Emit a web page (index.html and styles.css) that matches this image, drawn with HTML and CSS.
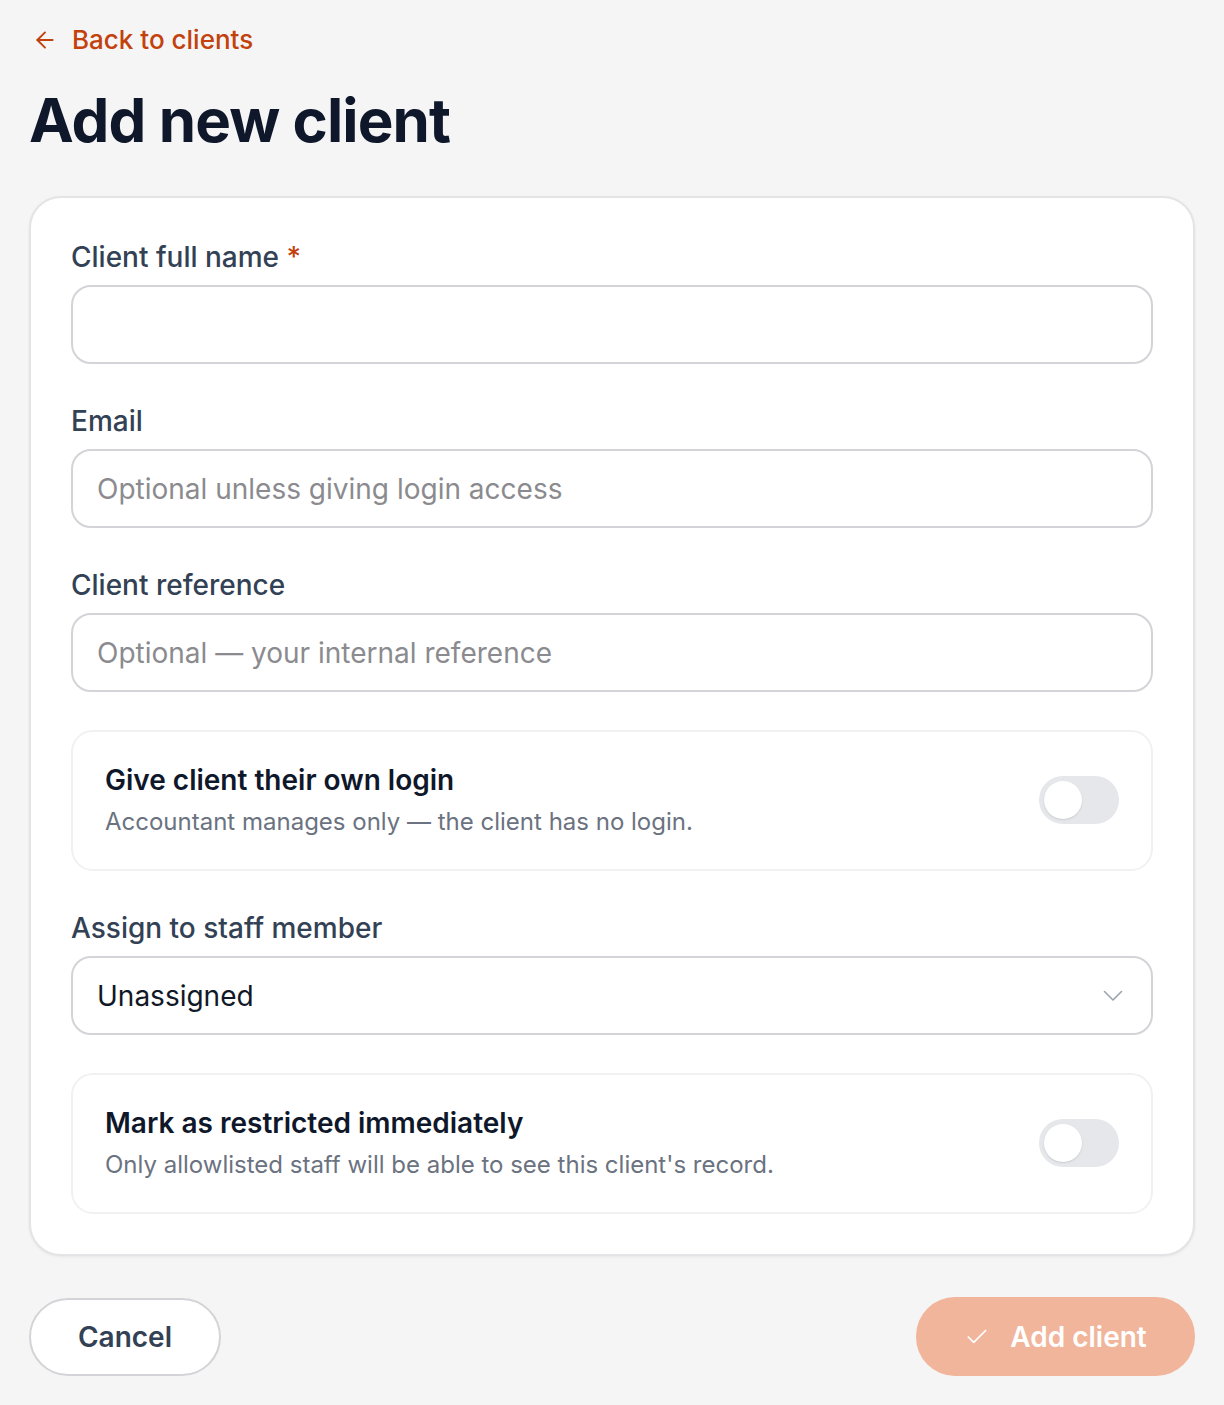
FILE: index.html
```html
<!DOCTYPE html>
<html lang="en">
<head>
<meta charset="utf-8">
<title>Add new client</title>
<link rel="stylesheet" href="styles.css">
</head>
<body>
<div class="page">
  <a class="back" href="#">
    <svg class="back-icon" viewBox="0 0 24 24" width="26" height="26" fill="none" stroke="currentColor" stroke-width="1.8" stroke-linecap="round" stroke-linejoin="round"><path d="M19 12H5"/><path d="M12 19l-7-7 7-7"/></svg>
    <span>Back to clients</span>
  </a>
  <h1 class="title">Add new client</h1>

  <form class="card">
    <div class="field">
      <label class="label">Client full name <span class="req">*</span></label>
      <input class="input" type="text">
    </div>
    <div class="field">
      <label class="label">Email</label>
      <input class="input" type="text" placeholder="Optional unless giving login access">
    </div>
    <div class="field">
      <label class="label">Client reference</label>
      <input class="input" type="text" placeholder="Optional — your internal reference">
    </div>
    <div class="toggle-card">
      <div class="toggle-text">
        <div class="toggle-title">Give client their own login</div>
        <div class="toggle-sub">Accountant manages only — the client has no login.</div>
      </div>
      <span class="switch"><span class="knob"></span></span>
    </div>
    <div class="field">
      <label class="label">Assign to staff member</label>
      <div class="select">
        <span>Unassigned</span>
        <svg class="chev" viewBox="0 0 20 12" width="20" height="12" fill="none" stroke="currentColor" stroke-width="1.6" stroke-linecap="round" stroke-linejoin="round"><path d="M1.5 1.5L10 10l8.5-8.5"/></svg>
      </div>
    </div>
    <div class="toggle-card last">
      <div class="toggle-text">
        <div class="toggle-title">Mark as restricted immediately</div>
        <div class="toggle-sub">Only allowlisted staff will be able to see this client's record.</div>
      </div>
      <span class="switch"><span class="knob"></span></span>
    </div>
  </form>

  <div class="actions">
    <button class="btn btn-cancel" type="button">Cancel</button>
    <button class="btn btn-primary" type="button">
      <svg viewBox="0 0 24 24" width="26" height="26" fill="none" stroke="currentColor" stroke-width="1.6" stroke-linecap="round" stroke-linejoin="round"><path d="M20 6L9 17l-5-5"/></svg>
      <span>Add client</span>
    </button>
  </div>
</div>
</body>
</html>
```

FILE: styles.css
```css
* { box-sizing: border-box; }

html, body {
  margin: 0;
  background: #f5f5f5;
}

body {
  font-family: Inter, "Noto Sans", sans-serif;
  color: #0f172a;
}

.page {
  padding: 22px 29px 29px;
}

.back {
  display: inline-flex;
  align-items: center;
  gap: 14px;
  color: #c2410c;
  text-decoration: none;
  font-size: 26px;
  font-weight: 500;
  line-height: 36px;
  padding-left: 3px;
}

.back-icon { display: block; }

.title {
  margin: 26px 0 40px;
  font-size: 60px;
  line-height: 72px;
  font-weight: 700;
  letter-spacing: -0.015em;
  color: #0f172a;
}

.card {
  background: #fff;
  border: 2px solid #e4e4e7;
  border-radius: 32px;
  padding: 40px 40px 40px;
  box-shadow: 0 1px 3px rgba(0,0,0,0.06);
}

.field {
  margin-bottom: 38px;
}

.label {
  display: block;
  font-size: 28px;
  line-height: 38px;
  font-weight: 500;
  color: #334155;
  margin-bottom: 9px;
}

.req { color: #c2410c; }

.input,
.select {
  display: block;
  width: 100%;
  height: 79px;
  border: 2px solid #d4d4d8;
  border-radius: 20px;
  background: #fff;
  padding: 0 24px;
  font-family: inherit;
  font-size: 28px;
  color: #111827;
  outline: none;
}

.input::placeholder { color: #8b8b8f; }

.select {
  display: flex;
  align-items: center;
  justify-content: space-between;
  padding-right: 28px;
}

.chev { color: #9ca3af; display: block; }

.toggle-card {
  display: flex;
  align-items: center;
  justify-content: space-between;
  border: 2px solid #f1f1f3;
  border-radius: 22px;
  padding: 30px 32px 31px;
  margin-bottom: 38px;
}

.toggle-card.last { margin-bottom: 0; }

.toggle-title {
  font-size: 28px;
  line-height: 36px;
  font-weight: 600;
  color: #0f172a;
}

.toggle-sub {
  margin-top: 8px;
  font-size: 24px;
  line-height: 32px;
  color: #6b7280;
}

.switch {
  position: relative;
  display: block;
  flex: none;
  width: 80px;
  height: 48px;
  border-radius: 24px;
  background: #e5e7eb;
}

.knob {
  position: absolute;
  left: 5px;
  top: 5px;
  width: 38px;
  height: 38px;
  border-radius: 50%;
  background: #fff;
  box-shadow: 0 1px 2px rgba(0,0,0,0.12);
}

.actions {
  display: flex;
  justify-content: space-between;
  align-items: center;
  margin-top: 41px;
}

.btn {
  height: 78px;
  border-radius: 39px;
  font-family: inherit;
  font-size: 28px;
  font-weight: 600;
  cursor: pointer;
  display: inline-flex;
  align-items: center;
  justify-content: center;
}

.btn-cancel {
  width: 192px;
  background: #fff;
  border: 2px solid #d4d4d8;
  color: #334155;
}

.btn-primary {
  width: 279px;
  height: 79px;
  border: none;
  background: #f1b59b;
  color: #fff;
  gap: 20px;
}

.btn-primary svg { display: block; }
```
